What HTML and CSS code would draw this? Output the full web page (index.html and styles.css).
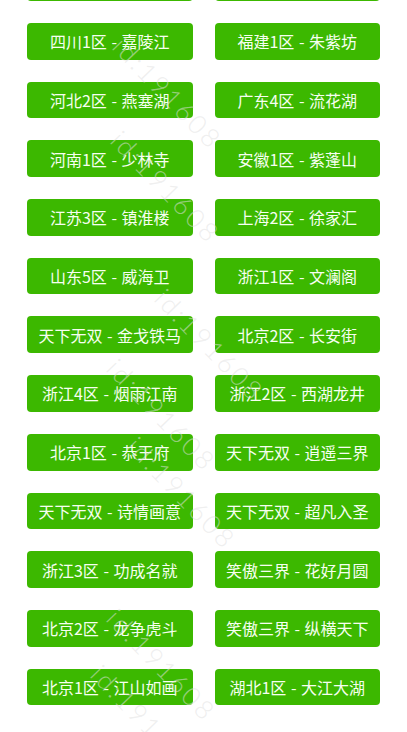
FILE: index.html
```html
<!DOCTYPE html>
<html lang="zh-CN">
<head>
    <meta charset="UTF-8">
    <meta name="viewport" content="width=device-width, initial-scale=1.0">
    <title>选择大区</title>
    <link rel="stylesheet" href="styles.css">
</head>
<body>
<div class="server-list">
    <a class="server"></a>
    <a class="server"></a>
    <a class="server">四川1区 - 嘉陵江</a>
    <a class="server">福建1区 - 朱紫坊</a>
    <a class="server">河北2区 - 燕塞湖</a>
    <a class="server">广东4区 - 流花湖</a>
    <a class="server">河南1区 - 少林寺</a>
    <a class="server">安徽1区 - 紫蓬山</a>
    <a class="server">江苏3区 - 镇淮楼</a>
    <a class="server">上海2区 - 徐家汇</a>
    <a class="server">山东5区 - 威海卫</a>
    <a class="server">浙江1区 - 文澜阁</a>
    <a class="server">天下无双 - 金戈铁马</a>
    <a class="server">北京2区 - 长安街</a>
    <a class="server">浙江4区 - 烟雨江南</a>
    <a class="server">浙江2区 - 西湖龙井</a>
    <a class="server">北京1区 - 恭王府</a>
    <a class="server">天下无双 - 逍遥三界</a>
    <a class="server">天下无双 - 诗情画意</a>
    <a class="server">天下无双 - 超凡入圣</a>
    <a class="server">浙江3区 - 功成名就</a>
    <a class="server">笑傲三界 - 花好月圆</a>
    <a class="server">北京2区 - 龙争虎斗</a>
    <a class="server">笑傲三界 - 纵横天下</a>
    <a class="server">北京1区 - 江山如画</a>
    <a class="server">湖北1区 - 大江大湖</a>
</div>

<!-- watermark layer -->
<div class="watermark">
    <span class="mark m1">id:191608</span>
    <span class="mark m2">id:191608</span>
    <span class="mark m3">id:191608</span>
    <span class="mark m4">id:191608</span>
    <span class="mark m5">id:191608</span>
    <span class="mark m6">id:191608</span>
    <span class="mark m7">id:191608</span>
</div>
</body>
</html>
```

FILE: styles.css
```css
body {
    margin: 0;
    background: #fff;
    font-family: "Noto Sans CJK SC", "Noto Sans", sans-serif;
    overflow: hidden;
}
.server-list {
    display: grid;
    grid-template-columns: 1fr 1fr;
    grid-auto-rows: 36.7px;
    column-gap: 22px;
    row-gap: 22px;
    padding: 0 27px;
    margin-top: -35.7px;
}
.server {
    display: flex;
    align-items: center;
    justify-content: center;
    background: #3cb800;
    color: #f6fff0;
    font-size: 16px;
    word-spacing: 1px;
    border-radius: 4px;
    white-space: nowrap;
}
.watermark {
    position: absolute;
    top: 0;
    left: 0;
    width: 100%;
    height: 100%;
    pointer-events: none;
    overflow: hidden;
}
.mark {
    position: absolute;
    font-family: "Lato", "Open Sans", sans-serif;
    font-weight: 300;
    font-size: 26px;
    letter-spacing: 3px;
    color: rgba(225,225,225,0.55);
    transform-origin: left center;
    transform: rotate(46deg);
    white-space: nowrap;
    line-height: 1;
}
.m1 { left: 118px; top: 28px; }
.m2 { left: 116px; top: 122px; }
.m3 { left: 160px; top: 280px; }
.m4 { left: 112px; top: 350px; }
.m5 { left: 132px; top: 428px; }
.m6 { left: 112px; top: 600px; }
.m7 { left: 96px; top: 656px; }
```
